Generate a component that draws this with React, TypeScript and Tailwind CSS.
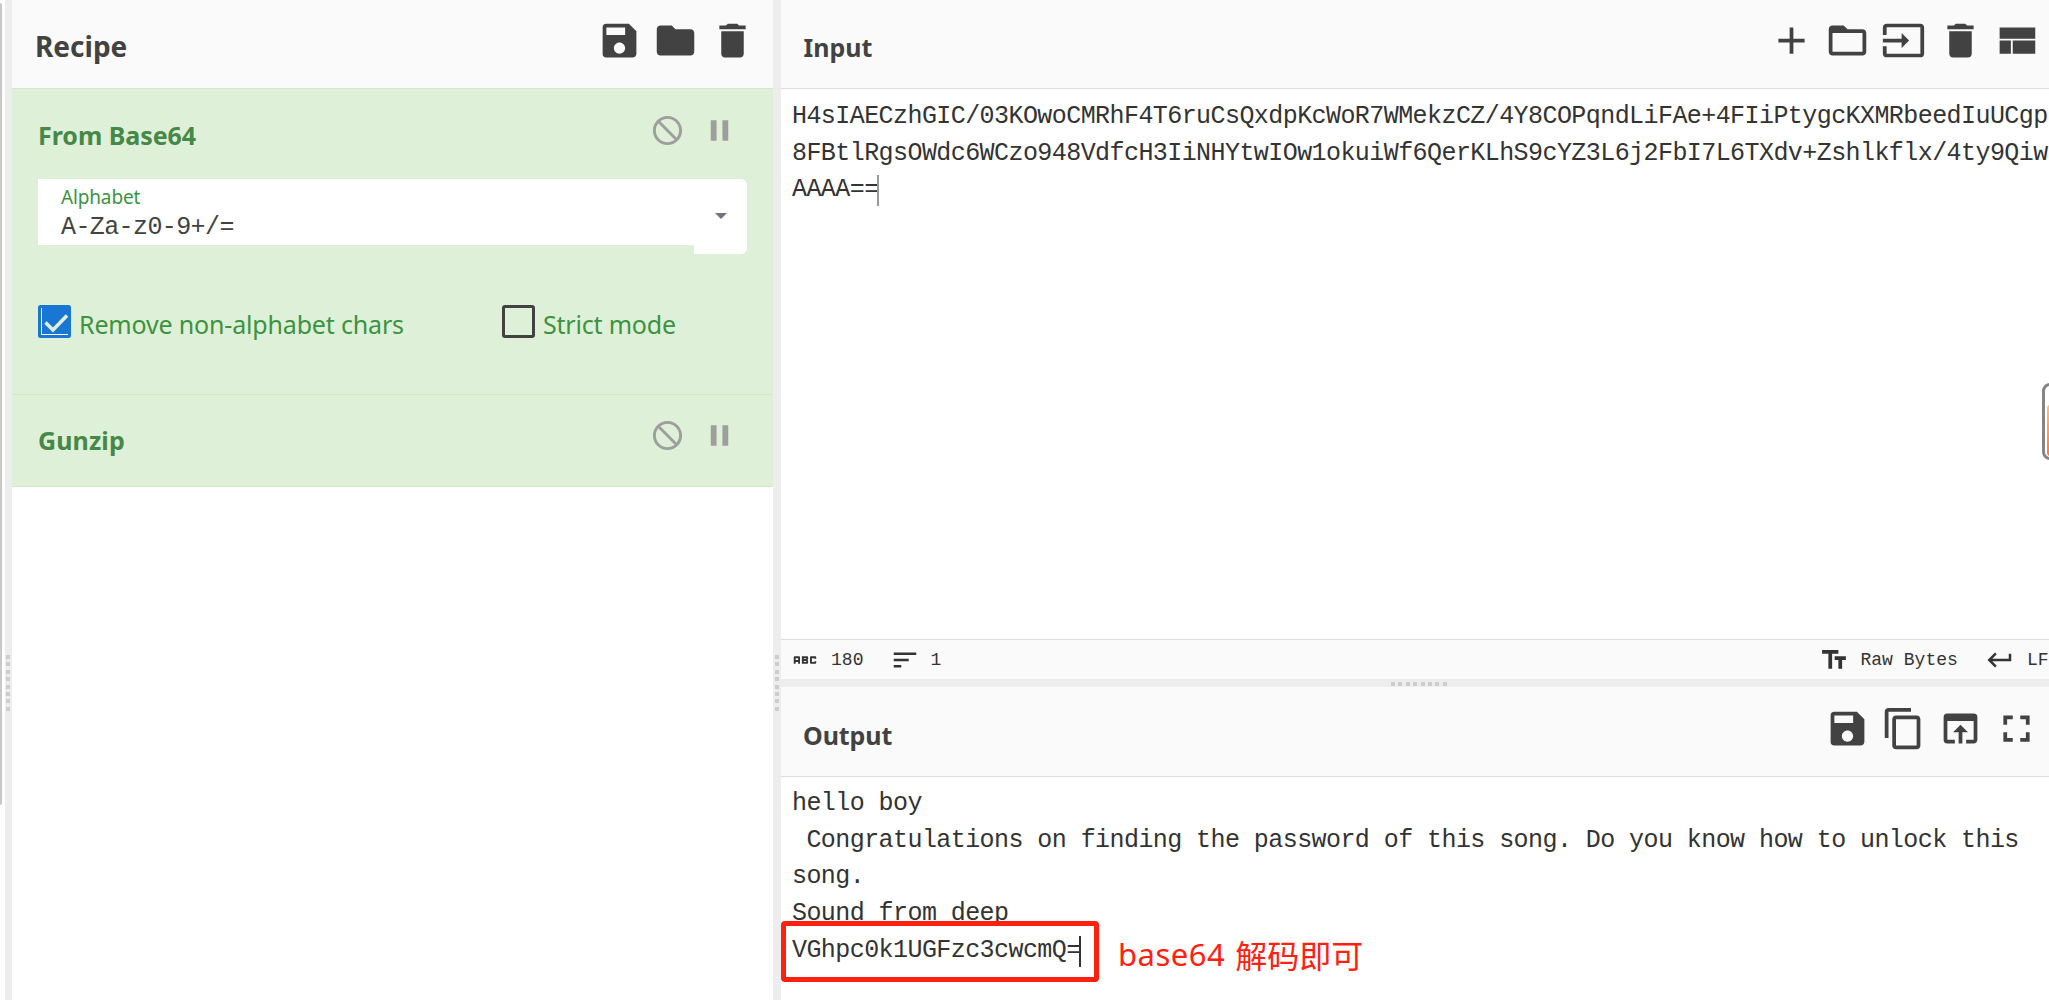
import React from "react";
import {
  MdSave, MdFolder, MdDelete, MdBlock, MdPause, MdAdd, MdContentCopy,
  MdOpenInBrowser, MdFullscreen, MdAbc, MdSort, MdTextFields, MdKeyboardReturn,
} from "react-icons/md";

const ui = "font-['Noto_Sans','Open_Sans',sans-serif]";
const mono = "font-['Liberation_Mono','DejaVu_Sans_Mono',monospace]";

function FolderOutline() {
  return (
    <svg viewBox="0 0 24 24" width="45" height="45" fill="currentColor">
      <path d="M20 6h-8l-2-2H4c-1.1 0-1.99.9-1.99 2L2 18c0 1.1.9 2 2 2h16c1.1 0 2-.9 2-2V8c0-1.1-.9-2-2-2zm0 12H4V8h16v10z" />
    </svg>
  );
}

function Compact() {
  return (
    <svg viewBox="0 0 24 24" width="45" height="45" fill="currentColor">
      <path d="M3 19h6v-7H3v7zm7 0h12v-7H10v7zM3 5v6h19V5H3z" />
    </svg>
  );
}

function InputIcon() {
  return (
    <svg viewBox="0 0 24 24" width="45" height="45" fill="currentColor">
      <path d="M21 3.01H3c-1.1 0-2 .9-2 2V9h2V4.99h18v14.03H3V15H1v4.01c0 1.1.9 1.98 2 1.98h18c1.1 0 2-.88 2-1.98v-14c0-1.11-.9-2-2-2zM11 16l4-4-4-4v3H1v2h10v3z" />
    </svg>
  );
}

const dots = [0, 1, 2, 3, 4, 5, 6, 7];

function Grip({ vertical }: { vertical?: boolean }) {
  return (
    <div className={vertical ? "flex flex-col gap-[3.4px]" : "flex gap-[3.4px]"}>
      {dots.map((d) => (
        <span key={d} className="block size-[4px] shrink-0 bg-[#cdcdcd]" />
      ))}
    </div>
  );
}

function OpControls() {
  return (
    <div className="flex gap-[17.5px] text-[#9e9e9e]">
      <MdBlock size={35} className="-scale-x-100" />
      <MdPause size={35} />
    </div>
  );
}

export default function App() {
  return (
    <div className={`relative flex h-[1000px] w-[2049px] overflow-hidden bg-white text-[#424242] ${ui}`}>
      <div className="w-[5px] shrink-0 pt-[3px]">
        <div className="h-[802px] w-[2px] rounded-r-sm bg-[#c8c8c8]" />
      </div>
      <div className="w-[7px] shrink-0 bg-[#ededed] pl-px pt-[655px]">
        <Grip vertical />
      </div>

      <section className="w-[761px] shrink-0">
        <header className="flex h-[89px] items-start justify-between border-b border-[#dddddd] bg-[#fafafa] pl-[23px] pr-[18.5px] pt-[18px]">
          <h1 className="mt-[10px] text-[28px] font-bold leading-[36px]">Recipe</h1>
          <div className="flex gap-[11.3px]">
            <MdSave size={45} />
            <MdFolder size={45} />
            <MdDelete size={45} />
          </div>
        </header>

        <article className="h-[306px] border-b border-[#d0e9c6] bg-[#dff0d8] pl-[26px] pr-[26px] pt-[24px]">
          <div className="flex h-[66px] items-start justify-between pr-[10px]">
            <h2 className="mt-[5px] text-[25px] font-bold leading-[34px] tracking-[-0.05px] text-[#468847]">From Base64</h2>
            <OpControls />
          </div>
          <div className="flex items-start">
            <div className="h-[66px] w-[656px] bg-white pl-[23px] pt-[6px]">
              <div className="text-[19px] leading-[24px] tracking-[-0.15px] text-[#3c9340]">Alphabet</div>
              <div className={`relative top-[2px] text-[25px] leading-[34px] tracking-[-0.6px] ${mono}`}>A-Za-z0-9+/=</div>
            </div>
            <div className="flex h-[75px] w-[53px] items-center justify-center rounded-r-[6px] bg-white">
              <span className="mt-[-2px] border-x-[6px] border-t-[6px] border-x-transparent border-t-[#6c757d]" />
            </div>
          </div>
          <div className="mt-[51px] flex text-[25px] leading-[34px] text-[#3c9340]">
            <label className="flex w-[464px] items-start gap-[8px]">
              <svg width="33" height="33" viewBox="0 0 33 33">
                <rect width="33" height="33" rx="2.5" fill="#1976d2" />
                <path d="M3.5 3v26.500H30" fill="none" stroke="#fff" strokeWidth="1" />
                <path d="M7.500 17.500L15 25L29 10.500" fill="none" stroke="#dff0d8" strokeWidth="3.600" />
              </svg>
              <span className="mt-[2px] whitespace-nowrap tracking-[-0.17px]">Remove non-alphabet chars</span>
            </label>
            <label className="flex items-start gap-[8px]">
              <span className="size-[33px] rounded-[3px] border-[3px] border-[#424242]" />
              <span className="mt-[2px] whitespace-nowrap tracking-[-0.2px]">Strict mode</span>
            </label>
          </div>
        </article>

        <article className="flex h-[92px] items-start justify-between border-b border-[#d0e9c6] bg-[#dff0d8] pl-[26px] pr-[36px] pt-[23px]">
          <h2 className="mt-[5px] text-[25px] font-bold leading-[34px] tracking-[0.1px] text-[#468847]">Gunzip</h2>
          <OpControls />
        </article>
      </section>

      <div className="w-[8px] shrink-0 bg-[#ededed] pl-[2px] pt-[655px]">
        <Grip vertical />
      </div>

      <section className="flex w-[1268px] shrink-0 flex-col">
        <header className="flex h-[89px] shrink-0 items-start justify-between border-b border-[#dddddd] bg-[#fafafa] pl-[22.5px] pr-[10px] pt-[18px]">
          <h1 className="mt-[11px] text-[25px] font-bold leading-[36px]">Input</h1>
          <div className="flex gap-[11.3px]">
            <MdAdd size={45} />
            <FolderOutline />
            <InputIcon />
            <MdDelete size={45} />
            <Compact />
          </div>
        </header>
        <div className={`h-[550px] shrink-0 whitespace-pre pl-[11px] pt-[10px] text-[25px] leading-[36.7px] tracking-[-0.57px] text-[#333] ${mono}`}>
          <div>H4sIAECzhGIC/03KOwoCMRhF4T6ruCsQxdpKcWoR7WMekzCZ/4Y8COPqndLiFAe+4FIiPtygcKXMRbeedIuUCgp</div>
          <div>8FBtlRgsOWdc6WCzo948VdfcH3IiNHYtwIOw1okuiWf6QerKLhS9cYZ3L6j2FbI7L6TXdv+Zshlkflx/4ty9Qiw</div>
          <div className="flex items-center">
            AAAA==<span className="-ml-[2px] h-[31px] w-[2px] bg-[#999]" />
          </div>
        </div>
        <div className={`flex h-[40px] shrink-0 items-center border-t border-[#dddddd] bg-[#fafafa] pl-[9px] pt-px text-[18px] tracking-[0.04px] text-[#333] ${mono}`}>
          <MdAbc size={30} />
          <span className="ml-[11px] pt-px">180</span>
          <MdSort size={30} className="ml-[26px]" />
          <span className="ml-[11px] pt-px">1</span>
          <MdTextFields size={30} className="ml-[878px] shrink-0" />
          <span className="ml-[11px] whitespace-pre pt-px">Raw Bytes</span>
          <MdKeyboardReturn size={30} className="ml-[27px] shrink-0" />
          <span className="ml-[12px] pt-px">LF</span>
        </div>
        <div className="flex h-[8px] shrink-0 bg-[#ededed] pl-[610px] pt-[3px]">
          <Grip />
        </div>
        <header className="flex h-[90px] shrink-0 items-start justify-between border-b border-[#dddddd] bg-[#fafafa] pl-[22px] pr-[10px] pt-[19px]">
          <h1 className="mt-[11px] text-[25px] font-bold leading-[36px] tracking-[-0.1px]">Output</h1>
          <div className="flex gap-[11.3px]">
            <MdSave size={45} />
            <MdContentCopy size={45} />
            <MdOpenInBrowser size={45} />
            <MdFullscreen size={45} />
          </div>
        </header>
        <div className={`whitespace-pre pl-[11px] pt-[9px] text-[25px] leading-[36.7px] tracking-[-0.57px] text-[#333] ${mono}`}>
          <div>hello boy</div>
          <div> Congratulations on finding the password of this song. Do you know how to unlock this</div>
          <div>song.</div>
          <div>Sound from deep</div>
          <div className="flex items-center">
            VGhpc0k1UGFzc3cwcmQ=<span className="-ml-[2px] h-[31px] w-[2px] bg-[#333]" />
          </div>
        </div>
      </section>

      <div className="absolute left-[781px] top-[921px] h-[61px] w-[318px] rounded-[4px] border-[5px] border-[#ff2010]" />
      <div className="absolute left-[1118px] top-[931px] flex items-center gap-[10px] whitespace-nowrap text-[31px] leading-[46px] text-[#ff2010]">
        <span className="tracking-[0.5px]">base64</span>
        <span className="font-['Noto_Sans_CJK_SC',sans-serif] text-[32px]">解码即可</span>
      </div>
      <div className="absolute left-[2042px] top-[383px] h-[77px] w-[30px] rounded-[8px] border-[3px] border-[#858585] bg-white pl-[2px] pt-[19px]">
        <div className="h-[51px] rounded-[3px] bg-linear-to-b from-[#ffc07a] to-[#ff7733]" />
      </div>
    </div>
  );
}
